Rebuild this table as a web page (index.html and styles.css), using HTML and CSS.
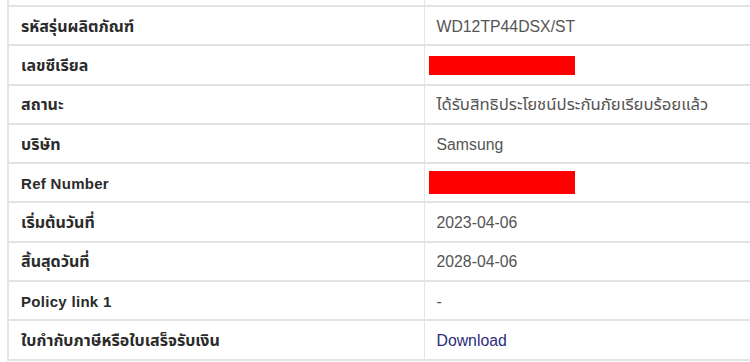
FILE: index.html
```html
<!DOCTYPE html>
<html lang="th">
<head>
<meta charset="utf-8">
<link rel="stylesheet" href="styles.css">
</head>
<body>
<table class="info">
  <tr class="cut"><td class="label"></td><td class="value"></td></tr>
  <tr><td class="label">รหัสรุ่นผลิตภัณฑ์</td><td class="value">WD12TP44DSX/ST</td></tr>
  <tr><td class="label">เลขซีเรียล</td><td class="value"><span class="redact"></span></td></tr>
  <tr><td class="label">สถานะ</td><td class="value th">ได้รับสิทธิประโยชน์ประกันภัยเรียบร้อยแล้ว</td></tr>
  <tr><td class="label">บริษัท</td><td class="value">Samsung</td></tr>
  <tr><td class="label en">Ref Number</td><td class="value"><span class="redact tall"></span></td></tr>
  <tr><td class="label">เริ่มต้นวันที่</td><td class="value">2023-04-06</td></tr>
  <tr><td class="label">สิ้นสุดวันที่</td><td class="value">2028-04-06</td></tr>
  <tr><td class="label en">Policy link 1</td><td class="value">-</td></tr>
  <tr><td class="label">ใบกำกับภาษีหรือใบเสร็จรับเงิน</td><td class="value"><a class="link" href="#">Download</a></td></tr>
</table>
</body>
</html>
```
FILE: styles.css
```css
html, body {
  margin: 0;
  padding: 0;
  background: #ffffff;
}
body {
  padding-left: 7px;
  overflow: hidden;
  width: 750px;
  height: 362px;
}
.info {
  border-collapse: collapse;
  width: 760px;
  font-family: "Liberation Sans", "Noto Sans Thai", "Noto Sans Thai Looped", sans-serif;
}
.info td {
  border-bottom: 2px solid #e3e3e3;
  height: 39.3px;
  padding: 0 12px;
  box-sizing: border-box;
  vertical-align: middle;
}
.info tr.cut td {
  height: 6px;
}
.info td.label {
  width: 416px;
  border-left: 2px solid #e6e6e6;
  border-right: 1px solid #e6e6e6;
  font-family: "Noto Sans Thai", "Liberation Sans", sans-serif;
  font-weight: 700;
  font-size: 16px;
  color: #2b2b2b;
  padding-top: 2px;
}
.info td.label.en {
  font-family: "Liberation Sans", sans-serif;
  font-size: 15px;
  letter-spacing: 0.3px;
}
.info td.value {
  font-size: 15.8px;
  color: #555555;
  padding-top: 2px;
  padding-left: 12px;
}
.info td.value.th {
  font-size: 16.7px;
}
.redact {
  display: block;
  width: 146px;
  height: 19px;
  background: #ff0000;
  margin-left: -8px;
}
.redact.tall {
  height: 23px;
  margin-top: -2px;
}
.link {
  color: #2c2c7c;
  text-decoration: none;
}
```
